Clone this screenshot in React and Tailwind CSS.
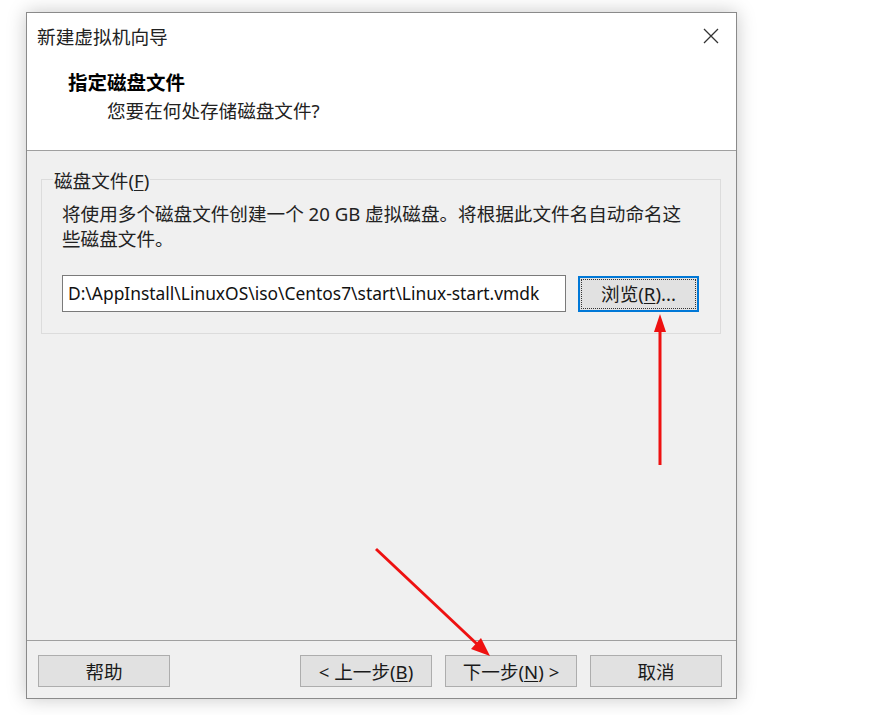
import React from "react";

function Btn({ children, className = "" }) {
  return (
    <div
      className={`flex h-[32px] w-[132px] items-center justify-center border border-[#adadad] bg-[#e1e1e1] text-[18.6px] text-[#1a1a1a] ${className}`}
    >
      {children}
    </div>
  );
}

export default function App() {
  return (
    <div className="relative h-[715px] w-[881px] overflow-hidden bg-white font-['Noto_Sans','Noto_Sans_CJK_SC',sans-serif] leading-[25px] text-[#1a1a1a]">
      <div className="pl-[26px] pt-[12px]">
        <div className="flex h-[687px] w-[711px] flex-col border border-[#8a8a8a] bg-[#f0f0f0] shadow-[0_0_18px_rgba(0,0,0,0.22)]">
          {/* title + header */}
          <div className="border-b border-[#a0a0a0] bg-white">
            <div className="flex h-[46px] items-center justify-between pl-[10px] pr-[17px]">
              <span className="text-[18.7px] text-[#222]">新建虚拟机向导</span>
              <svg width="16" height="16" viewBox="0 0 16 16" className="text-[#333]">
                <path d="M1 1 L15 15 M15 1 L1 15" stroke="currentColor" strokeWidth="1.3" />
              </svg>
            </div>
            <div className="h-[91px] pl-[41px] pt-[11px]">
              <div className="text-[19.5px] font-bold text-black">指定磁盘文件</div>
              <div className="pl-[39px] pt-[3px] text-[18.6px] text-[#222]">您要在何处存储磁盘文件?</div>
            </div>
          </div>

          {/* body */}
          <div className="flex-1 px-[14px] pt-[28px]">
            <div className="relative h-[155px] w-[680px] border border-[#dcdcdc]">
              <div className="absolute left-[11px] top-[-12px] bg-[#f0f0f0] px-[1px] text-[18.6px] text-[#222]">
                磁盘文件(<span className="underline underline-offset-2">F</span>)
              </div>
              <div className="pl-[20px] pr-[30px] pt-[21px] text-[18.6px] leading-[25px] text-[#222]">
                将使用多个磁盘文件创建一个 20 GB 虚拟磁盘。将根据此文件名自动命名这些磁盘文件。
              </div>
              <div className="flex items-center pl-[20px] pt-[24px]">
                <div className="flex h-[37px] w-[504px] items-center border border-[#7a7a7a] bg-white pl-[5px] text-[17.4px] text-[#111]">
                  D:\AppInstall\LinuxOS\iso\Centos7\start\Linux-start.vmdk
                </div>
                <div className="ml-[12px] flex h-[36px] w-[121px] items-center justify-center border-2 border-[#0078d7] bg-[#e1e1e1] p-[1px]">
                  <div className="flex h-full w-full items-center justify-center border border-dotted border-[#333] text-[18.6px] text-[#1a1a1a]">
                    浏览(<span className="underline underline-offset-2">R</span>)...
                  </div>
                </div>
              </div>
            </div>
          </div>

          {/* footer */}
          <div className="h-[58px] border-t border-[#a0a0a0] px-[11px] pt-[14px]">
            <div className="flex">
              <Btn>帮助</Btn>
              <Btn className="ml-[130px]">
                &lt; 上一步(<span className="underline underline-offset-2">B</span>)
              </Btn>
              <Btn className="ml-[13px]">
                下一步(<span className="underline underline-offset-2">N</span>) &gt;
              </Btn>
              <Btn className="ml-[13px]">取消</Btn>
            </div>
          </div>
        </div>
      </div>

      {/* annotation arrows */}
      <svg className="pointer-events-none absolute left-0 top-0" width="881" height="715">
        <line x1="660" y1="465" x2="660" y2="330" stroke="#ee1111" strokeWidth="3" />
        <polygon points="660,314 654,332 666,332" fill="#ee1111" />
        <line x1="376" y1="549" x2="478" y2="645" stroke="#ee1111" strokeWidth="3" />
        <polygon points="490,656 471,649 481,638" fill="#ee1111" />
      </svg>
    </div>
  );
}
